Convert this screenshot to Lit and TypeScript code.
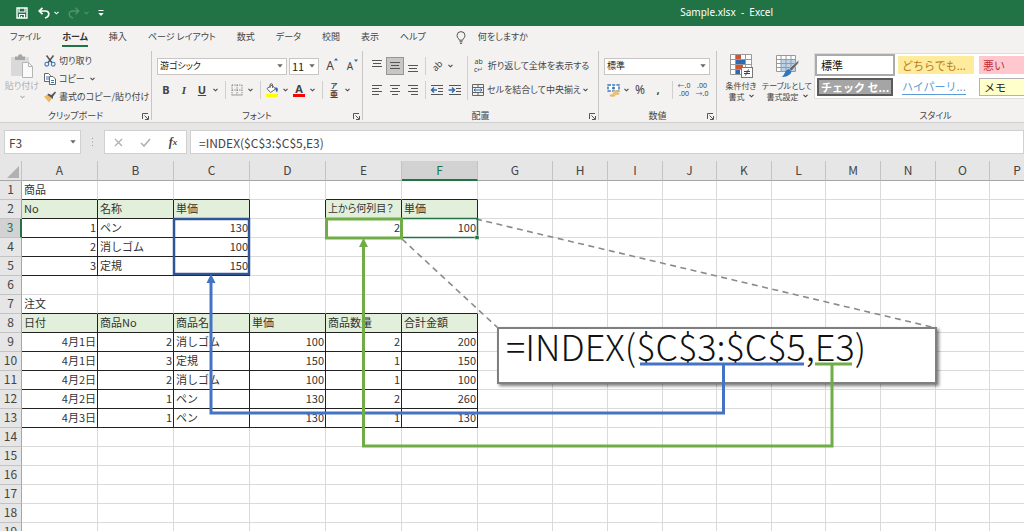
import { LitElement, html, svg, css, nothing } from "lit";
import { customElement, property } from "lit/decorators.js";
import { classMap } from "lit/directives/class-map.js";

const G = "#555";

const ICONS: Record<string, { w: number; h: number; body: unknown }> = {
  save: { w: 12, h: 12, body: svg`<path d="M1 1H11V11H1Z" fill="none" stroke="#fff" stroke-width="1.4"/><path d="M3 1V5H9V1" fill="none" stroke="#fff" stroke-width="1.2"/><path d="M3.5 11V7.5H8.5V11M5.5 9V11" fill="none" stroke="#fff" stroke-width="1.2"/>` },
  undo: { w: 12, h: 12, body: svg`<path d="M4.5 .8L1.2 4L4.5 7.2M1.4 4H7.4C12 4 12 9.800 7 11" fill="none" stroke="#fff" stroke-width="1.7"/>` },
  redo: { w: 12, h: 12, body: svg`<path d="M7.500 .8L10.800 4L7.500 7.2M10.600 4H4.600C0 4 0 9.800 5 11" fill="none" stroke="#4f9570" stroke-width="1.4"/>` },
  custom: { w: 6, h: 8, body: svg`<path d="M.5 1.500H5.500" stroke="#fff"/><path d="M.3 4H5.700L3 7Z" fill="#fff"/>` },
  bulb: { w: 10, h: 13, body: svg`<path d="M3.300 9.200C3.300 7.500 1 7 1 4.600A4 4 0 0 1 9 4.600C9 7 6.700 7.500 6.700 9.200ZM3.500 10.800H6.500M4 12.400H6" fill="none" stroke="#555"/>` },
  paste: { w: 22, h: 24, body: svg`<rect x="0" y="3" width="18" height="19" fill="#d9d9dc"/><path d="M4 2.500H7A2.200 2.200 0 0 1 11.500 2.500H14V6H4Z" fill="#a6a6a6"/><path d="M11.500 8.500H17.500L21.500 12.500V23.500H11.500Z" fill="#fafafa" stroke="#b5b5b5"/><path d="M17.500 8.500V12.500H21.500" fill="none" stroke="#b5b5b5"/>` },
  cut: { w: 12, h: 12, body: svg`<path d="M2.500 .5L8.200 8M9.500 .5L3.800 8" stroke="#555" stroke-width="1.500"/><circle cx="2.800" cy="9.200" r="1.900" fill="none" stroke="#3b78b8" stroke-width="1.100"/><circle cx="9.200" cy="9.200" r="1.900" fill="none" stroke="#3b78b8" stroke-width="1.100"/>` },
  copy: { w: 12, h: 12, body: svg`<path d="M.5 .5H4.500L6.500 2.500V8.500H.5Z" fill="#fff" stroke="#666"/><path d="M2 4H5M2 6H5" stroke="#3b78b8"/><path d="M5.500 3.500H9L11.500 6V11.500H5.500Z" fill="#fff" stroke="#666"/><path d="M7 7.500H10M7 9.500H10" stroke="#3b78b8"/>` },
  painter: { w: 12, h: 12, body: svg`<path d="M0 5.500L4 3.500L8 7.500L5 11.500Z" fill="#edb967"/><path d="M4 2.500L7.500 4L11 .5L12 1.500L9 5.500L9 8L3.500 4Z" fill="#555"/>` },
  grow: { w: 14, h: 14, body: svg`<path d="M9 3.500L11 1L13 3.500Z" fill="#2b6cb0"/>` },
  border: { w: 12, h: 12, body: svg`<path d="M1 1H11M1 1V11M11 1V11M6 1V11M1 6H11" stroke="#777" stroke-dasharray="1.200 1.200" fill="none"/><path d="M.5 11H11.500" stroke="#999"/>` },
  fill: { w: 14, h: 14, body: svg`<path d="M2 5.500L7 2L10.500 6L5.500 9.500Z" fill="#fff" stroke="#666"/><path d="M5 5V2A1.300 1.300 0 0 1 7.600 2V5" fill="none" stroke="#666"/><path d="M10 4.500C13 4 13.500 6 12 9.500C11 8 10.500 7 10 4.500Z" fill="#2f66a8"/><rect x="1" y="11" width="12" height="3" fill="#ff0"/>` },
  top: { w: 12, h: 12, body: svg`<path d="M1 .5H11M2 3.500H10M1 6.500H11" stroke="${G}"/>` },
  middle: { w: 12, h: 12, body: svg`<path d="M1 2.500H11M2 5.500H10M1 8.500H11" stroke="${G}"/>` },
  bottom: { w: 12, h: 12, body: svg`<path d="M1 5.500H11M2 8.500H10M1 11.500H11" stroke="${G}"/>` },
  left: { w: 12, h: 12, body: svg`<path d="M1 1.500H11M1 4.500H8M1 7.500H11M1 10.500H8" stroke="${G}"/>` },
  center: { w: 12, h: 12, body: svg`<path d="M1 1.500H11M3 4.500H9M1 7.500H11M3 10.500H9" stroke="${G}"/>` },
  right: { w: 12, h: 12, body: svg`<path d="M1 1.500H11M4 4.500H11M1 7.500H11M4 10.500H11" stroke="${G}"/>` },
  outdent: { w: 14, h: 12, body: svg`<path d="M1 1.500H13M8 4.500H13M8 7.500H13M1 10.500H13" stroke="${G}"/><path d="M7 6H2M4 3.500L1.500 6L4 8.500" stroke="#2b6cb0" stroke-width="1.500" fill="none"/>` },
  indent: { w: 14, h: 12, body: svg`<path d="M1 1.500H13M8 4.500H13M8 7.500H13M1 10.500H13" stroke="${G}"/><path d="M.5 6H6M4 3.500L6.500 6L4 8.500" stroke="#2b6cb0" stroke-width="1.500" fill="none"/>` },
  merge: { w: 12, h: 12, body: svg`<path d="M.5 .5H11.500V11.500H.5ZM.5 3.500H11.500M.5 8.500H11.500M6 .5V3.500M6 8.500V11.500" fill="none" stroke="#666"/><path d="M2 6H10M3.500 4.500L2 6L3.500 7.500M8.500 4.500L10 6L8.500 7.500" fill="none" stroke="#2b6cb0"/>` },
  money: { w: 13, h: 13, body: svg`<path d="M1 1H12V7H1Z" fill="#fff" stroke="#3b78b8" stroke-width="1.500" stroke-dasharray="3 1.200"/><circle cx="6.500" cy="4" r="1.500" fill="#3b78b8"/><ellipse cx="9" cy="7.500" rx="3.500" ry="1.300" fill="#edb967"/><ellipse cx="9" cy="9.800" rx="3.500" ry="1" fill="#edb967"/><ellipse cx="5.500" cy="11.500" rx="3" ry="1.200" fill="#edb967"/>` },
  cond: { w: 23, h: 24, body: svg`<rect x=".5" y=".5" width="21" height="20" fill="#fff"/><rect x="6" y="1" width="5" height="4" fill="#d35230"/><rect x="6" y="6" width="9" height="4" fill="#2b6cb0"/><rect x="6" y="11" width="7" height="4" fill="#d35230"/><rect x="6" y="16" width="4" height="4" fill="#2b6cb0"/><path d="M.5 .5H21.500V20.500H.5ZM.5 5.500H21.500M.5 10.500H21.500M.5 15.500H21.500M5.500 .5V20.500M15.500 .5V20.500" fill="none" stroke="#999"/><rect x="11.500" y="13.500" width="11" height="10" fill="#fff" stroke="#777"/><path d="M14 17.500H20M14 19.500H20M18.500 15.500L15.500 21.500" stroke="#444"/>` },
  tablefmt: { w: 23, h: 24, body: svg`<rect x=".5" y="1.500" width="19" height="16" fill="#fff"/><rect x="5" y="6" width="14.500" height="11.500" fill="#b9d3ec"/><path d="M.5 1.500H19.500V17.500H.5ZM.5 5.500H19.500M.5 9.500H19.500M.5 13.500H19.500M5 1.500V17.500M10 1.500V17.500M15 1.500V17.500" fill="none" stroke="#999"/><path d="M22.800 6L22.500 9L15.500 17L13 14.800Z" fill="#666" stroke="#f3f2f1" stroke-width=".5"/><path d="M13 15L15.500 17.500C15 21 10 23.500 5.500 22.800C9 21.500 8.500 16 13 15Z" fill="#2f75b8"/>` },
  launcher: { w: 7, h: 7, body: svg`<path d="M.5 6V.5H6M2.500 2.500L6 6M6.500 3V6.500H3" fill="none" stroke="#555"/>` },
  chevron: { w: 5, h: 4, body: svg`<path d="M.5 .8L2.500 2.800L4.500 .8" fill="none" stroke="currentColor" stroke-width="1.100"/>` },
  caret: { w: 6, h: 4, body: svg`<path d="M.3 .3H5.700L3 3.500Z" fill="#666"/>` },
  cancel: { w: 9, h: 9, body: svg`<path d="M1 1L8 8M8 1L1 8" stroke="#b0b0b0" stroke-width="1.300"/>` },
  accept: { w: 11, h: 9, body: svg`<path d="M1 5L4 8L10 1" fill="none" stroke="#b0b0b0" stroke-width="1.600"/>` },
  dots: { w: 3, h: 10, body: svg`<path d="M1 1H2V2H1ZM1 4.500H2V5.500H1ZM1 8H2V9H1Z" fill="#999"/>` },
  corner: { w: 12, h: 12, body: svg`<path d="M12 0V12H0Z" fill="#b1b1b1"/>` },
};

const icon = (name: string) => {
  const i = ICONS[name];
  return html`<svg class="icon" width=${i.w} height=${i.h} viewBox="0 0 ${i.w} ${i.h}" aria-hidden="true">${i.body}</svg>`;
};

const tool = (label: string, body: unknown, cls = "") =>
  html`<button class="tool ${cls}" aria-label=${label}>${body}</button>`;
const drop = (label: string) =>
  html`<button class="drop" aria-label="${label} オプション">${icon("chevron")}</button>`;
const sep = html`<span class="sep"></span>`;

@customElement("ribbon-group")
class RibbonGroup extends LitElement {
  @property() label = "";
  @property({ type: Boolean }) launcher = false;
  static styles = css`
    :host { display: flex; flex-direction: column; flex: none; box-sizing: border-box; border-right: 1px solid #c8c6c4; height: 69px; }
    .content { flex: 1; display: flex; padding: 0 5px; }
    .foot { position: relative; height: 13px; display: flex; align-items: center; justify-content: center; margin-bottom: -2px; }
    .launch { position: absolute; right: 2px; bottom: 2px; width: 7px; height: 7px; padding: 0; border: 0; background: none; display: flex; }
  `;
  render() {
    return html`<div class="content"><slot></slot></div>
      <div class="foot"><span>${this.label}</span>
        ${this.launcher ? html`<button class="launch" aria-label="${this.label}の設定">${icon("launcher")}</button>` : nothing}
      </div>`;
  }
}

type Cell = string | number;
const DATA: Record<string, Cell> = {
  A1: "商品",
  A2: "No", B2: "名称", C2: "単価", E2: "上から何列目？", F2: "単価",
  A3: 1, B3: "ペン", C3: 130, E3: 2, F3: 100,
  A4: 2, B4: "消しゴム", C4: 100,
  A5: 3, B5: "定規", C5: 150,
  A7: "注文",
};
["日付", "商品No", "商品名", "単価", "商品数量", "合計金額"].forEach((t, i) => (DATA["ABCDEF"[i] + 8] = t));
const ORDERS: Cell[][] = [
  ["4月1日", 2, "消しゴム", 100, 2, 200],
  ["4月1日", 3, "定規", 150, 1, 150],
  ["4月2日", 2, "消しゴム", 100, 1, 100],
  ["4月2日", 1, "ペン", 130, 2, 260],
  ["4月3日", 1, "ペン", 130, 1, 130],
];
ORDERS.forEach((row, r) => row.forEach((v, c) => (DATA["ABCDEF"[c] + (9 + r)] = v)));

// Framed ranges as [first column, first row, last column, last row].
const FRAMES = [[0, 2, 2, 5], [4, 2, 5, 3], [0, 8, 5, 13]];
const framed = (c: number, r: number) => FRAMES.some(([a, b, d, e]) => c >= a && c <= d && r >= b && r <= e);
const headed = (c: number, r: number) => FRAMES.some(([a, b, d]) => c >= a && c <= d && r === b);

const COLUMNS = [..."ABCDEFGHIJKLMNOP"];
const COL_CLASS = (i: number) => (i < 6 ? "wide" : i === 6 ? "mid" : [9, 11, 14].includes(i) ? "slim" : "std");
const ROWS = Array.from({ length: 19 }, (_, i) => i + 1);

@customElement("sheet-grid")
class SheetGrid extends LitElement {
  static styles = css`
    :host { display: block; position: relative; overflow: hidden; background: #fff; }
    table { table-layout: fixed; width: 0; border-collapse: separate; border-spacing: 0; }
    .rowhead { width: 22px; }
    .wide { width: 76px; }
    .mid { width: 75px; }
    .std { width: 55px; }
    .slim { width: 54px; }
    th, td { box-sizing: border-box; padding: 0 1px 2px 2px; height: 19px; line-height: 16px; font-size: 11px; font-weight: 400; white-space: nowrap; border: 0 solid #dadada; border-width: 0 1px 1px 0; overflow: visible; }
    th { background: #e6e6e6; color: #444; font-size: 12px; text-align: center; padding: 0 0 2px; border-color: #c3c3c3; }
    thead th { height: 20px; border-bottom-color: #a6a6a6; }
    tbody th { border-right-color: #a6a6a6; }
    .corner { vertical-align: bottom; }
    .corner svg { display: block; margin: 0 2px 0 auto; }
    .active { background: #d2d2d2; color: #217346; }
    thead .active { border-bottom: 2px solid #217346; padding-bottom: 1px; }
    tbody .active { border-right: 2px solid #217346; }
    .num { text-align: right; }
    .head { background: #e2efda; }
    .small { font-size: 10px; font-feature-settings: "palt"; }
    .lineR { border-right-color: #222; }
    .lineB { border-bottom-color: #222; }
    .callout { position: absolute; left: 497px; top: 166px; width: 440px; height: 57px; box-sizing: border-box; border: 2px solid #7f7f7f; background: #fff; box-shadow: 2px 2px 3px rgba(0, 0, 0, 0.5); padding-left: 7px; font-size: 36px; line-height: 32px; font-weight: 300; color: #111; white-space: nowrap; }
    .marks { position: absolute; left: 0; top: 0; pointer-events: none; }
  `;
  render() {
    return html`
      <table>
        <colgroup><col class="rowhead">${COLUMNS.map((_, i) => html`<col class=${COL_CLASS(i)}>`)}</colgroup>
        <thead><tr><th class="corner" aria-label="すべて選択">${icon("corner")}</th>
          ${COLUMNS.map((c) => html`<th scope="col" class=${c === "F" ? "active" : ""}>${c}</th>`)}</tr></thead>
        <tbody>${ROWS.map((r) => html`<tr><th scope="row" class=${r === 3 ? "active" : ""}>${r}</th>
          ${COLUMNS.map((c, i) => {
            const v = DATA[c + r];
            return html`<td class=${classMap({
              num: typeof v === "number" || (typeof v === "string" && /^\d月/.test(v)),
              head: headed(i, r),
              small: c + r === "E2",
              lineR: framed(i, r) || framed(i + 1, r),
              lineB: framed(i, r) || framed(i, r + 1),
            })}>${v ?? nothing}</td>`;
          })}</tr>`)}</tbody>
      </table>
      <div class="callout">=INDEX($C$3:$C$5,E3)</div>
      <svg class="marks" width="1024" height="370" viewBox="0 161 1024 370" fill="none" aria-hidden="true">
        <path d="M476 219L936 328M402 239L498 328" stroke="#8a8a8a" stroke-width="1.6" stroke-dasharray="6 4.500"/>
        <path d="M401.500 218.500H477.500V237.500H401.500Z" stroke="#217346" stroke-width="1.500"/>
        <rect x="475" y="235.500" width="4" height="4" fill="#217346" stroke="#fff" stroke-width=".5"/>
        <rect x="174" y="219" width="75" height="55" stroke="#2f5597" stroke-width="2.500"/>
        <rect x="326.500" y="219" width="75" height="19" stroke="#70ad47" stroke-width="3"/>
        <path d="M211 280V413H723.500V364" stroke="#4472c4" stroke-width="3"/>
        <path d="M640 364H804" stroke="#4472c4" stroke-width="3"/>
        <path d="M211 274L215.500 283H206.500Z" fill="#4472c4"/>
        <path d="M363.500 245V446H832V364" stroke="#70ad47" stroke-width="3"/>
        <path d="M815 364H852" stroke="#70ad47" stroke-width="3"/>
        <path d="M363.500 238L368 247H359Z" fill="#70ad47"/>
      </svg>`;
  }
}

const TABS = ["ファイル", "ホーム", "挿入", "ページ レイアウト", "数式", "データ", "校閲", "表示", "ヘルプ"];

@customElement("app-root")
class AppRoot extends LitElement {
  static styles = css`
    :host { display: flex; flex-direction: column; height: 100vh; overflow: hidden; background: #e6e6e6; color: #444; font-family: "Noto Sans CJK JP", "Noto Sans", sans-serif; font-size: 9px; line-height: 12px; }
    * { box-sizing: border-box; }
    button, select, input { font: inherit; color: inherit; margin: 0; padding: 0; border: 0; background: none; border-radius: 0; }
    button { display: flex; align-items: center; justify-content: center; white-space: nowrap; }
    .title { flex: none; height: 26px; background: #217346; color: #fff; display: flex; align-items: center; padding-left: 16px; font-family: "Noto Sans", sans-serif; font-size: 10px; }
    .title button { height: 18px; }
    .title .save { width: 12px; margin-right: 10px; }
    .title .undo { width: 12px; }
    .title .drop { width: 12px; margin-right: 6px; }
    .title .dim { color: #4f9570; }
    .title .name { margin: 0 251px 2px auto; white-space: pre; }
    .tabs { flex: none; height: 25px; background: #f3f2f1; display: flex; align-items: flex-start; gap: 21px; padding: 3px 10px 0; font-feature-settings: "palt"; }
    .tabs button { height: 18px; border-bottom: 2px solid transparent; }
    .tabs .on { border-color: #217346; font-weight: 700; color: #333; }
    .tabs .ask { gap: 12px; margin-left: 9px; }
    .ribbon { flex: none; height: 72px; background: #f3f2f1; border-bottom: 1px solid #d2d0ce; display: flex; overflow: hidden; font-feature-settings: "palt"; }
    .g-clip { width: 152px; }
    .g-font { width: 211px; }
    .g-align { width: 236px; }
    .g-num { width: 118px; }
    .g-style { width: 438px; }
    .big { flex-direction: column; justify-content: flex-start; line-height: 11px; height: 52px; padding-top: 3px; }
    .big svg { margin-bottom: 2px; }
    .paste { width: 34px; color: #b0b0b0; }
    .paste .icon:last-child { margin-top: 4px; }
    .items { display: flex; flex-direction: column; align-items: flex-start; padding: 1px 0 0 5px; }
    .items button { height: 18px; gap: 3px; }
    .items .icon:last-child { margin-left: 2px; }
    .rows { display: flex; flex-direction: column; gap: 6px; padding-top: 6px; }
    .row { display: flex; align-items: center; height: 18px; }
    .row.tight { gap: 2px; }
    .tool { width: 18px; height: 18px; flex: none; font-size: 12px; font-family: "Noto Sans", "Noto Sans CJK JP", sans-serif; }
    .tool.on { background: #c8c6c4; border: 1px solid #979593; }
    .drop { width: 9px; height: 18px; flex: none; }
    .bold { font-weight: 700; font-size: 11px; }
    .ital { font-style: italic; font-size: 11px; font-family: "Liberation Serif", serif; font-weight: 700; }
    .under { text-decoration: underline; font-size: 11px; font-weight: 700; }
    .grow, .shrink { position: relative; }
    .shrink { font-size: 10px; }
    .grow svg, .shrink svg { position: absolute; right: 0; top: 0; }
    .shrink svg { transform: rotate(180deg); transform-origin: 11px 3px; }
    .acolor { flex-direction: column; font-size: 11px; line-height: 11px; font-weight: 700; }
    .acolor i { width: 12px; height: 3px; background: #f00; }
    .ruby { flex-direction: column; font-size: 8px; line-height: 9px; font-weight: 700; }
    .ruby .kana { font-size: 7px; line-height: 7px; }
    .stack { flex-direction: column; align-items: center; font-size: 7px; line-height: 8px; }
    .stack b { color: #2b6cb0; font-weight: 400; }
    .tilt span { transform: rotate(-45deg); font-size: 9px; }
    .sep { width: 1px; height: 18px; background: #d2d0ce; margin: 0 2px 0 5px; flex: none; }
    .row.al .sep { margin-left: 3px; }
    .vline { width: 1px; height: 44px; background: #d2d0ce; margin: 5px 1px 0 3px; }
    .lead { height: 18px; }
    .lead .tool { display: flex; align-items: center; justify-content: center; }
    .pick { position: relative; display: flex; align-items: center; height: 17px; background: #fff; border: 1px solid #c8c6c4; }
    .pick select { appearance: none; flex: 1; min-width: 0; padding: 0 2px; height: 15px; outline: 0; color: #222; }
    .pick svg { position: absolute; right: 3px; pointer-events: none; }
    .w-font { width: 130px; }
    .w-size { width: 30px; font-size: 11px; }
    .w-num { width: 106px; }
    .cond, .tbl { font-size: 8px; }
    .cond { width: 38px; }
    .tbl { width: 54px; }
    .big .icon { flex: none; }
    .big span { display: flex; align-items: center; gap: 4px; }
    .gallery { flex: 1; height: 46px; margin-top: 2px; background: #fff; border: 1px solid #dcdcdc; display: grid; grid-template-columns: 76px 76px 1fr; grid-template-rows: 18px 18px; gap: 4px 5px; padding: 2px; font-size: 11px; font-feature-settings: normal; }
    .gallery button { justify-content: flex-start; padding-left: 4px; }
    .gallery .normal { outline: 2px solid #ababab; color: #111; }
    .gallery .neutral { background: #ffeb9c; color: #b87a1c; }
    .gallery .bad { background: #ffc7ce; color: #c0303c; }
    .gallery .check { background: #a5a5a5; border: 2px solid #5a5a5a; color: #fff; font-weight: 700; padding-left: 2px; }
    .gallery .link { color: #5b9bd5; }
    .gallery .link span { border-bottom: 1px solid #5b9bd5; line-height: 15px; }
    .gallery .memo { background: #ffffcc; border: 1px solid #b2b2b2; color: #222; }
    .formula { flex: none; display: flex; height: 38px; padding: 7px 0 7px 4px; font-size: 12px; }
    .box { background: #fff; border: 1px solid #d0d0d0; display: flex; align-items: center; }
    .namebox { width: 77px; padding: 0 4px; }
    .namebox input { width: 50px; }
    .namebox svg { margin-left: auto; }
    .grip { display: flex; align-items: center; padding: 0 10px; }
    .keys { width: 83px; justify-content: space-around; margin-right: 3px; }
    .fx { font: italic 700 12px "Liberation Serif", serif; }
    .fx small { font-size: 9px; }
    .bar { flex: 1; padding: 0 8px; }
    .bar input { flex: 1; }
    input { outline: 0; }
    sheet-grid { flex: 1; min-height: 0; color: #333; }
  `;
  render() {
    return html`
      <header class="title">
        <button class="save" aria-label="上書き保存">${icon("save")}</button>
        <button class="undo" aria-label="元に戻す">${icon("undo")}</button>${drop("元に戻す")}
        <button class="undo" aria-label="やり直し">${icon("redo")}</button>
        <button class="drop dim" aria-label="やり直し オプション">${icon("chevron")}</button>
        <button aria-label="ツールバーのカスタマイズ">${icon("custom")}</button>
        <span class="name">Sample.xlsx  -  Excel</span>
      </header>
      <nav class="tabs">
        ${TABS.map((t) => html`<button class=${t === "ホーム" ? "on" : ""}>${t}</button>`)}
        <button class="ask">${icon("bulb")}<span>何をしますか</span></button>
      </nav>
      <div class="ribbon">
        <ribbon-group class="g-clip" label="クリップボード" launcher>
          <button class="big paste">${icon("paste")}<span>貼り付け</span>${icon("chevron")}</button>
          <div class="items">
            <button>${icon("cut")}<span>切り取り</span></button>
            <button>${icon("copy")}<span>コピー</span>${icon("chevron")}</button>
            <button>${icon("painter")}<span>書式のコピー/貼り付け</span></button>
          </div>
        </ribbon-group>
        <ribbon-group class="g-font" label="フォント" launcher>
          <div class="rows">
            <div class="row tight">
              <label class="pick w-font"><select aria-label="フォント名"><option>游ゴシック</option></select>${icon("caret")}</label>
              <label class="pick w-size"><select aria-label="フォント サイズ"><option>11</option></select>${icon("caret")}</label>
              ${tool("拡大", html`A${icon("grow")}`, "grow")}${tool("縮小", html`A${icon("grow")}`, "shrink")}
            </div>
            <div class="row">
              ${tool("太字", "B", "bold")}${tool("斜体", "I", "ital")}${tool("下線", "U", "under")}${drop("下線")}${sep}
              ${tool("罫線", icon("border"))}${drop("罫線")}${sep}
              ${tool("塗りつぶし", icon("fill"))}${drop("塗りつぶし")}
              ${tool("文字色", html`A<i></i>`, "acolor")}${drop("文字色")}${sep}
              ${tool("ふりがな", html`<span class="kana">ア</span><span>亜</span>`, "ruby")}${drop("ふりがな")}
            </div>
          </div>
        </ribbon-group>
        <ribbon-group class="g-align" label="配置" launcher>
          <div class="rows">
            <div class="row al">${tool("上揃え", icon("top"))}${tool("上下中央", icon("middle"), "on")}${tool("下揃え", icon("bottom"))}${sep}
              ${tool("方向", html`<span>ab</span>`, "tilt")}${drop("方向")}</div>
            <div class="row al">${tool("左揃え", icon("left"))}${tool("中央揃え", icon("center"))}${tool("右揃え", icon("right"))}${sep}
              ${tool("インデント減", icon("outdent"))}${tool("インデント増", icon("indent"))}</div>
          </div>
          <span class="vline"></span>
          <div class="rows">
            <button class="row lead"><span class="tool stack"><span>ab</span><span>c<b>↵</b></span></span><span>折り返して全体を表示する</span></button>
            <div class="row"><button class="lead"><span class="tool">${icon("merge")}</span><span>セルを結合して中央揃え</span></button>${drop("結合")}</div>
          </div>
        </ribbon-group>
        <ribbon-group class="g-num" label="数値" launcher>
          <div class="rows">
            <div class="row"><label class="pick w-num"><select aria-label="表示形式"><option>標準</option></select>${icon("caret")}</label></div>
            <div class="row">${tool("通貨", icon("money"))}${drop("通貨")}
              ${tool("パーセント", "%")}${tool("桁区切り", ",", "bold")}${sep}
              ${tool("小数点以下を増やす", html`<span><b>←</b>.0</span><span>.00</span>`, "stack")}${tool("小数点以下を減らす", html`<span>.00</span><span><b>→</b>.0</span>`, "stack")}</div>
          </div>
        </ribbon-group>
        <ribbon-group class="g-style" label="スタイル">
          <button class="big cond">${icon("cond")}<span>条件付き</span><span>書式${icon("chevron")}</span></button>
          <button class="big tbl">${icon("tablefmt")}<span>テーブルとして</span><span>書式設定${icon("chevron")}</span></button>
          <div class="gallery">
            <button class="normal">標準</button><button class="neutral">どちらでも...</button><button class="bad">悪い</button>
            <button class="check">チェック セ...</button><button class="link"><span>ハイパーリ...</span></button><button class="memo">メモ</button>
          </div>
        </ribbon-group>
      </div>
      <div class="formula">
        <div class="box namebox"><input aria-label="名前ボックス" .value=${"F3"}>${icon("caret")}</div>
        <span class="grip">${icon("dots")}</span>
        <div class="box keys"><button aria-label="キャンセル">${icon("cancel")}</button><button aria-label="入力">${icon("accept")}</button><button class="fx" aria-label="関数の挿入">f<small>x</small></button></div>
        <div class="box bar"><input aria-label="数式バー" .value=${"=INDEX($C$3:$C$5,E3)"}></div>
      </div>
      <sheet-grid></sheet-grid>`;
  }
}
